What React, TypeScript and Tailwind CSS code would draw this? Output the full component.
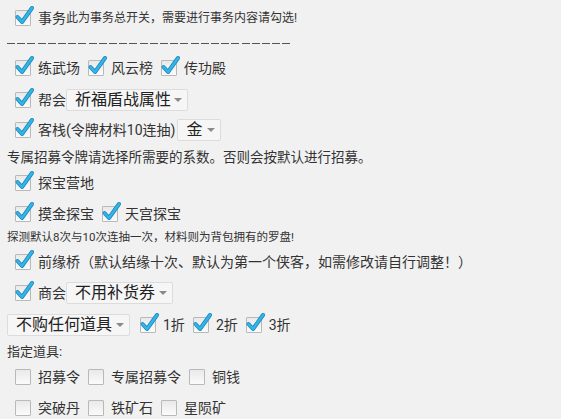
import React from "react";

const font = { fontFamily: '"Roboto","Noto Sans CJK SC",sans-serif' };

const Check = ({ on = true }: { on?: boolean }) => (
  <div className="relative w-[16px] h-[16px] shrink-0">
    <div className="absolute inset-0 border border-[#b9b9b9] bg-[linear-gradient(#e9e9e9,#fbfbfb)] rounded-[1px]" />
    {on && (
      <svg
        className="absolute -top-[5px] left-[0px] overflow-visible"
        width="20"
        height="22"
        viewBox="0 0 20 22"
      >
        <polyline
          points="2.5,12 7,17 17,3"
          fill="none"
          stroke="#1a86c0"
          strokeWidth="4"
          strokeLinecap="round"
          strokeLinejoin="round"
        />
        <polyline
          points="2.5,12 7,17 17,3"
          fill="none"
          stroke="#33b5e5"
          strokeWidth="2.4"
          strokeLinecap="round"
          strokeLinejoin="round"
        />
      </svg>
    )}
  </div>
);

const Item = ({ label, on = true, ml = "ml-[8px]" }: { label: string; on?: boolean; ml?: string }) => (
  <div className={`flex items-center ${ml}`}>
    <Check on={on} />
    <span className="ml-[7px] text-[14px] text-[#333] whitespace-nowrap">{label}</span>
  </div>
);

const Select = ({ value, w }: { value: string; w: string }) => (
  <div
    className={`flex items-center justify-between h-[22px] ${w} pl-[8px] pr-[5px] border border-[#dcdcdc] bg-[#f6f6f6] rounded-[2px]`}
  >
    <span className="text-[16px] text-[#222] leading-none whitespace-nowrap">{value}</span>
    <span className="w-0 h-0 border-l-[4px] border-r-[4px] border-t-[4px] border-l-transparent border-r-transparent border-t-[#8a8a8a]" />
  </div>
);

export default function App() {
  return (
    <div className="w-[561px] h-[419px] overflow-hidden bg-[#f1f1f1] px-[7px]" style={font}>
      <div className="h-[36px] flex items-center">
        <div className="flex items-center ml-[8px]">
          <Check />
          <span className="ml-[7px] text-[14px] text-[#333]">事务</span>
          <span className="text-[12px] text-[#333]">此为事务总开关，需要进行事务内容请勾选!</span>
        </div>
      </div>
      <div className="h-[14px] flex items-center">
        <div className="w-[284px] h-px bg-[repeating-linear-gradient(90deg,#555_0_8px,transparent_8px_10.2px)]" />
      </div>
      <div className="h-[36px] flex items-center">
        <Item label="练武场" />
        <Item label="风云榜" />
        <Item label="传功殿" />
      </div>
      <div className="h-[28px] flex items-center">
        <Item label="帮会" />
        <Select value="祈福盾战属性" w="w-[122px]" />
      </div>
      <div className="h-[32px] flex items-center">
        <Item label="客栈(令牌材料10连抽)" />
        <div className="ml-[2px]">
          <Select value="金" w="w-[44px]" />
        </div>
      </div>
      <div className="h-[22px] flex items-center text-[13.5px] text-[#333] whitespace-nowrap">
        专属招募令牌请选择所需要的系数。否则会按默认进行招募。
      </div>
      <div className="h-[30px] flex items-center">
        <Item label="探宝营地" />
      </div>
      <div className="h-[32px] flex items-center">
        <Item label="摸金探宝" />
        <Item label="天宫探宝" />
      </div>
      <div className="h-[16px] flex items-center text-[11.5px] text-[#333] whitespace-nowrap">
        探测默认8次与10次连抽一次，材料则为背包拥有的罗盘!
      </div>
      <div className="h-[32px] flex items-center">
        <Item label="前缘桥（默认结缘十次、默认为第一个侠客，如需修改请自行调整！）" />
      </div>
      <div className="h-[30px] flex items-center">
        <Item label="商会" />
        <Select value="不用补货券" w="w-[107px]" />
      </div>
      <div className="h-[34px] flex items-center">
        <Select value="不购任何道具" w="w-[123px]" />
        <Item label="1折" ml="ml-[10px]" />
        <Item label="2折" />
        <Item label="3折" />
      </div>
      <div className="h-[20px] flex items-center text-[13px] text-[#333]">指定道具:</div>
      <div className="h-[30px] flex items-center">
        <Item label="招募令" on={false} />
        <Item label="专属招募令" on={false} />
        <Item label="铜钱" on={false} />
      </div>
      <div className="h-[32px] flex items-center">
        <Item label="突破丹" on={false} />
        <Item label="铁矿石" on={false} />
        <Item label="星陨矿" on={false} />
      </div>
    </div>
  );
}
